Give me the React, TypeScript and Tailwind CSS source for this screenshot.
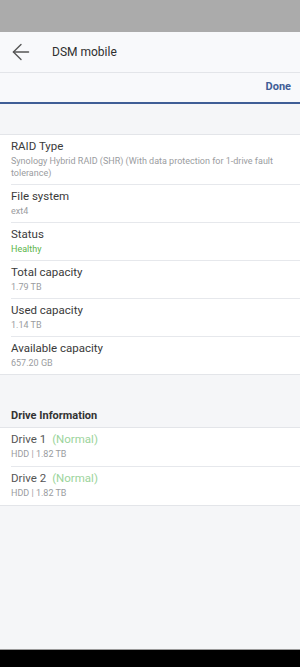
import { ArrowLeft } from "lucide-react";

interface InfoRow {
  label: string;
  value: string;
  valueClass?: string;
}

const volumeRows: InfoRow[] = [
  {
    label: "RAID Type",
    value: "Synology Hybrid RAID (SHR) (With data protection for 1-drive fault tolerance)",
  },
  { label: "File system", value: "ext4" },
  { label: "Status", value: "Healthy", valueClass: "text-[#5cb54a]" },
  { label: "Total capacity", value: "1.79 TB" },
  { label: "Used capacity", value: "1.14 TB" },
  { label: "Available capacity", value: "657.20 GB" },
];

const drives = [
  { name: "Drive 1", status: "Normal", detail: "HDD | 1.82 TB" },
  { name: "Drive 2", status: "Normal", detail: "HDD | 1.82 TB" },
];

function Row({ label, value, valueClass, last }: InfoRow & { last?: boolean }) {
  return (
    <div className={last ? "pl-[11px]" : "ml-[11px] border-b border-[#e6e8ec]"}>
      <div className="pt-[4px] pb-[5px] pr-[8px]">
        <div className="text-[11.5px] leading-[15px] text-[#3a3a3a]">{label}</div>
        <div className={`mt-[1px] text-[9px] leading-[12px] ${valueClass ?? "text-[#9a9ca0]"}`}>
          {value}
        </div>
      </div>
    </div>
  );
}

export default function App() {
  return (
    <div className="flex h-[667px] w-full flex-col bg-[#f5f6f8] font-['Roboto',sans-serif]">
      {/* status bar */}
      <div className="h-[32px] bg-[#ababab]" />

      {/* app header */}
      <div className="flex h-[41px] items-center border-b border-[#e3e5e9] bg-[#f8f9fb]">
        <ArrowLeft size={26} strokeWidth={1.25} className="ml-[8px] text-[#555]" />
        <span className="ml-[18px] text-[12px] text-[#2f2f2f]">DSM mobile</span>
      </div>

      {/* toolbar */}
      <div className="flex h-[31px] items-center justify-end border-b-2 border-[#3f5e96] bg-[#f8f9fb] pr-[9px]">
        <span className="text-[11px] font-bold text-[#3f5e96]">Done</span>
      </div>

      <div className="h-[30px]" />

      <div className="border-y border-[#e3e5e9] bg-white">
        {volumeRows.map((row, i) => (
          <Row key={row.label} {...row} last={i === volumeRows.length - 1} />
        ))}
      </div>

      <div className="flex h-[53px] items-end border-b border-[#e3e5e9] pb-[4px] pl-[11px]">
        <span className="text-[11px] font-bold leading-[15px] text-[#333]">Drive Information</span>
      </div>

      <div className="border-b border-[#e3e5e9] bg-white">
        {drives.map((d, i) => (
          <div
            key={d.name}
            className={i < drives.length - 1 ? "ml-[11px] border-b border-[#e6e8ec]" : "pl-[11px]"}
          >
            <div className="pt-[4px] pb-[6px]">
              <div className="text-[11.5px] leading-[15px] text-[#555]">
                {d.name}
                <span className="ml-[6px] text-[#9bd49b]">({d.status})</span>
              </div>
              <div className="mt-[1px] text-[9px] leading-[12px] text-[#9a9ca0]">{d.detail}</div>
            </div>
          </div>
        ))}
      </div>

      <div className="flex-1" />

      {/* nav bar */}
      <div className="h-[18px] border-t border-[#9a9a9a] bg-black" />
    </div>
  );
}
